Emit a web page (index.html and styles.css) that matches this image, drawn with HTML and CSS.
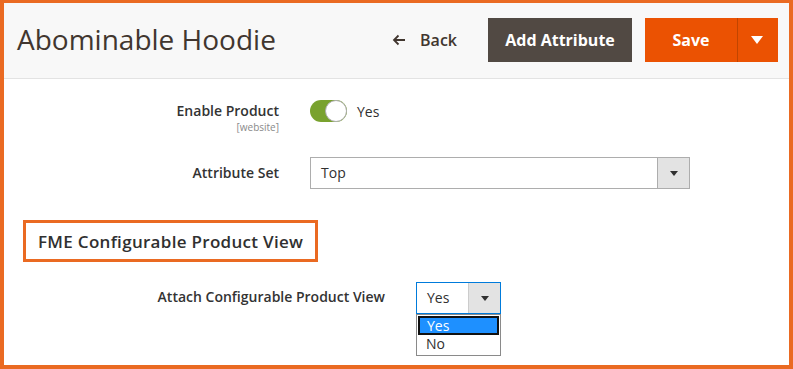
FILE: index.html
```html
<!DOCTYPE html>
<html lang="en">
<head>
    <meta charset="UTF-8">
    <meta name="viewport" content="width=device-width, initial-scale=1.0">
    <title>Abominable Hoodie</title>
    <link rel="stylesheet" href="styles.css">
</head>
<body>

    <div class="frame">
        <div class="page-header">
            <h1 class="page-title">Abominable Hoodie</h1>
            <div class="page-actions">
                <a href="#" class="back-button">
                    <svg class="back-arrow" width="14" height="12" viewBox="0 0 14 12">
                        <path d="M13 6H2M6.5 1.5L2 6l4.5 4.5" fill="none" stroke="#41362f" stroke-width="1.8"/>
                    </svg>
                    <span>Back</span>
                </a>
                <button class="action-button secondary">Add Attribute</button>
                <div class="split-button">
                    <button class="action-button primary">Save</button>
                    <button class="split-toggle"><span class="white-caret"></span></button>
                </div>
            </div>
        </div>

        <div class="page-content">
            <div class="field-row enable-row">
                <div class="field-label">
                    <span>Enable Product</span>
                    <span class="scope-label">[website]</span>
                </div>
                <div class="field-control">
                    <span class="toggle"><span class="toggle-knob"></span></span>
                    <span class="toggle-text">Yes</span>
                </div>
            </div>

            <div class="field-row set-row">
                <div class="field-label"><span>Attribute Set</span></div>
                <div class="field-control">
                    <div class="select-box wide">
                        <span class="select-value">Top</span>
                        <span class="select-arrow"><span class="caret"></span></span>
                    </div>
                </div>
            </div>

            <div class="section-title-box">
                <span class="section-title">FME Configurable Product View</span>
            </div>

            <div class="field-row attach-row">
                <div class="field-label"><span>Attach Configurable Product View</span></div>
                <div class="field-control">
                    <div class="select-wrap">
                        <div class="select-box small focused">
                            <span class="select-value">Yes</span>
                            <span class="select-arrow"><span class="caret"></span></span>
                        </div>
                        <div class="select-options">
                            <div class="select-option selected">Yes</div>
                            <div class="select-option">No</div>
                        </div>
                    </div>
                </div>
            </div>
        </div>
    </div>

</body>
</html>
```

FILE: styles.css
```css
:root {
    --frame-orange: #ea6a22;
    --header-bg: #f8f8f8;
    --text-dark: #303030;
    --title-color: #41362f;
    --button-dark: #514943;
    --button-orange: #eb5202;
    --border-gray: #adadad;
    --arrow-bg: #e3e3e3;
}

* {
    margin: 0;
    padding: 0;
    box-sizing: border-box;
}

body {
    font-family: 'Open Sans', 'Liberation Sans', sans-serif;
    color: var(--text-dark);
    background: #ffffff;
}

.frame {
    width: 793px;
    height: 369px;
    border: 4px solid var(--frame-orange);
    border-top-width: 3px;
    overflow: hidden;
}

/* Header */
.page-header {
    display: flex;
    justify-content: space-between;
    align-items: center;
    height: 76px;
    padding: 0 11px 0 13px;
    background-color: var(--header-bg);
    border-bottom: 1px solid #e3e3e3;
}

.page-title {
    font-size: 28px;
    font-weight: 400;
    color: var(--title-color);
    margin-top: -3px;
}

.page-actions {
    display: flex;
    align-items: center;
    margin-top: -2px;
}

.back-button {
    display: flex;
    align-items: center;
    gap: 14px;
    color: var(--title-color);
    text-decoration: none;
    font-size: 16px;
    font-weight: 600;
    margin-right: 31px;
}

.action-button {
    height: 44px;
    border: none;
    font-family: inherit;
    font-size: 16px;
    font-weight: 700;
    color: #ffffff;
    cursor: pointer;
}

.action-button.secondary {
    width: 144px;
    background-color: var(--button-dark);
    margin-right: 13px;
}

.split-button {
    display: flex;
}

.action-button.primary {
    width: 92px;
    background-color: var(--button-orange);
}

.split-toggle {
    width: 41px;
    height: 44px;
    border: none;
    border-left: 1px solid #c14500;
    background-color: var(--button-orange);
    display: flex;
    justify-content: center;
    align-items: center;
    padding-right: 2px;
}

.white-caret {
    width: 0;
    height: 0;
    border-left: 6px solid transparent;
    border-right: 6px solid transparent;
    border-top: 8px solid #ffffff;
}

/* Form */
.page-content {
    padding-top: 21px;
}

.field-row {
    display: grid;
    grid-template-columns: 275px 1fr;
    column-gap: 31px;
    align-items: start;
}

.field-label {
    display: flex;
    flex-direction: column;
    align-items: flex-end;
    font-size: 14px;
    font-weight: 600;
    line-height: 20px;
    padding-top: 1px;
    color: #333333;
}

.scope-label {
    font-size: 10px;
    font-weight: 400;
    color: #8a8a8a;
    line-height: 12px;
}

.field-control {
    display: flex;
    align-items: center;
}

.enable-row .field-control {
    height: 22px;
}

.toggle {
    width: 37px;
    height: 22px;
    border-radius: 11px;
    background-color: #79a22e;
    position: relative;
}

.toggle-knob {
    position: absolute;
    top: 0;
    right: 0;
    width: 22px;
    height: 22px;
    border-radius: 50%;
    background: #ffffff;
    border: 1px solid #adadad;
}

.toggle-text {
    margin-left: 10px;
    font-size: 14px;
}

.set-row {
    margin-top: 24px;
}

.set-row .field-label {
    padding-top: 6px;
}

.select-box {
    display: flex;
    height: 32px;
    border: 1px solid var(--border-gray);
    background: #ffffff;
}

.select-box.wide {
    width: 380px;
}

.select-box.small {
    width: 85px;
}

.select-box.focused {
    border-color: #007bdb;
}

.select-value {
    flex-grow: 1;
    font-size: 14px;
    line-height: 30px;
    padding-left: 10px;
}

.select-arrow {
    width: 32px;
    background-color: var(--arrow-bg);
    border-left: 1px solid var(--border-gray);
    display: flex;
    justify-content: center;
    align-items: center;
    padding-top: 1px;
}

.focused .select-arrow {
    border-left-color: #cccccc;
}

.caret {
    width: 0;
    height: 0;
    border-left: 4px solid transparent;
    border-right: 4px solid transparent;
    border-top: 5px solid #303030;
}

.section-title-box {
    display: inline-block;
    margin: 31px 0 0 19px;
    padding: 7px 12px 6px 12px;
    border: 3px solid var(--frame-orange);
}

.section-title {
    font-size: 17px;
    font-weight: 600;
    color: #303030;
    letter-spacing: 0.3px;
}

.attach-row {
    grid-template-columns: 381px 1fr;
    margin-top: 20px;
}

.attach-row .field-label {
    padding-top: 5px;
}

.select-wrap {
    position: relative;
}

.select-options {
    position: absolute;
    top: 32px;
    left: 0;
    width: 85px;
    background: #ffffff;
    border: 1px solid #8a8a8a;
    padding: 1px 0;
}

.select-option {
    font-size: 14px;
    line-height: 18px;
    height: 19px;
    padding-left: 9px;
}

.select-option.selected {
    background-color: #1e90ff;
    color: #ffffff;
    border: 2px solid #111111;
    line-height: 15px;
    padding-left: 7px;
    margin: 0 1px;
}
```
